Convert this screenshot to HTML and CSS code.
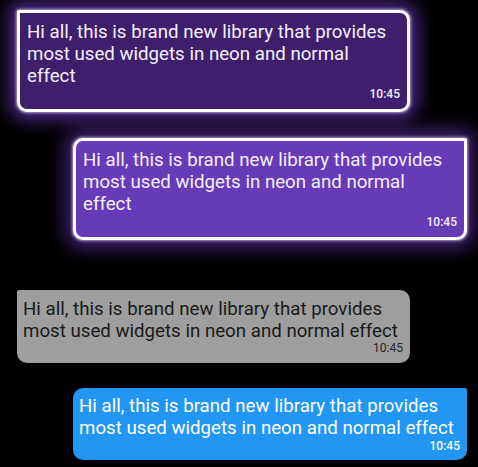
FILE: index.html
```html
<!DOCTYPE html>
<html>
<head>
<meta charset="utf-8">
<link rel="stylesheet" href="styles.css">
</head>
<body>
<div class="chat">
  <div class="bubble neon received dark">
    <p class="msg">Hi all, this is brand new library that provides most used widgets in neon and normal effect</p>
    <span class="time">10:45</span>
  </div>
  <div class="bubble neon sent purple">
    <p class="msg">Hi all, this is brand new library that provides most used widgets in neon and normal effect</p>
    <span class="time">10:45</span>
  </div>
  <div class="bubble plain received grey">
    <p class="msg">Hi all, this is brand new library that provides most used widgets in neon and normal effect</p>
    <span class="time">10:45</span>
  </div>
  <div class="bubble plain sent blue">
    <p class="msg">Hi all, this is brand new library that provides most used widgets in neon and normal effect</p>
    <span class="time">10:45</span>
  </div>
</div>
</body>
</html>
```
FILE: styles.css
```css
html, body {
  margin: 0;
  padding: 0;
  background: #000;
  height: 100%;
  overflow: hidden;
}
.chat {
  display: flex;
  flex-direction: column;
  padding: 10px 11px 0 17px;
  font-family: Roboto, "Noto Sans", sans-serif;
}
.bubble {
  box-sizing: border-box;
  width: 393px;
  display: flex;
  flex-direction: column;
  border-radius: 10px;
}
.received { align-self: flex-start; border-top-left-radius: 2px; }
.sent { align-self: flex-end; border-top-right-radius: 2px; width: 394px; }
.msg {
  margin: 0;
  font-size: 18.7px;
  line-height: 22px;
}
.time {
  align-self: flex-end;
  font-size: 12px;
  line-height: 12px;
}
.neon {
  border: 3px solid #fff;
  padding: 8px 7px 9px 7px;
  color: #f4f0fa;
}
.neon .time { margin-top: 1px; font-weight: 500; }
.dark {
  background: #3d1f6c;
  box-shadow: 0 0 3px 1px rgba(230, 210, 255, 0.7), 0 0 18px 8px rgba(100, 55, 180, 0.75);
}
.purple {
  background: #673ab7;
  box-shadow: 0 0 3px 1px rgba(230, 210, 255, 0.7), 0 0 18px 8px rgba(90, 45, 160, 0.7);
  margin-top: 26px;
}
.plain {
  padding: 8px 7px 9px 6px;
}
.grey {
  background: #9e9e9e;
  color: #1a1a1a;
  margin-top: 50px;
}
.grey .time { color: #262626; }
.blue {
  background: #2196f3;
  color: #fff;
  margin-top: 25px;
  padding-top: 7px;
  padding-bottom: 8px;
}
.blue .time { margin-top: 1px; font-weight: 500; }
```
